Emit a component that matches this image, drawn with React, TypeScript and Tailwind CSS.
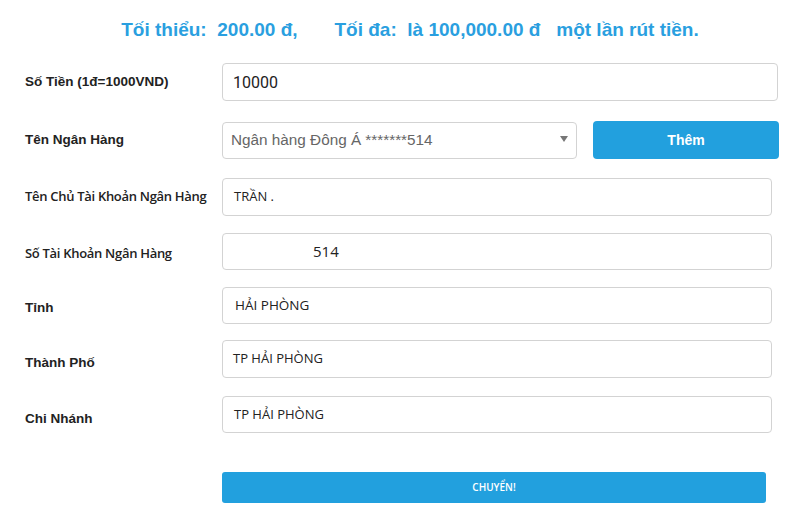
import { useState } from 'react';

const inputBox =
  'h-full w-full rounded-[4px] border border-[#d3d3d3] bg-white outline-none';

function Row({
  label,
  labelClass,
  top,
  height,
  children,
}: {
  label: string;
  labelClass?: string;
  top: string;
  height: string;
  children: React.ReactNode;
}) {
  return (
    <div className={`flex items-center ${top} ${height}`}>
      <div className={`w-[222px] shrink-0 pl-[25px] text-[#222] ${labelClass ?? ''}`}>{label}</div>
      <div className="flex h-full flex-1 items-stretch">{children}</div>
    </div>
  );
}

export default function App() {
  const [amount, setAmount] = useState('10000');

  const arial = "font-['Liberation_Sans',Arial,sans-serif]";
  const open = "font-['Open_Sans','Noto_Sans',sans-serif]";

  return (
    <div className="h-[521px] w-[800px] overflow-hidden bg-white">
      {/* Limits */}
      <div className="flex h-[60px] items-center justify-center pl-[20px]">
        <p className={`whitespace-pre text-[19px] font-bold text-[#2a9fe0] ${arial}`}>
          {'Tối thiểu:  200.00 đ,       Tối đa:  là 100,000.00 đ   một lần rút tiền.'}
        </p>
      </div>

      <Row label="Số Tiền (1đ=1000VND)" labelClass={`${arial} text-[13.5px] font-bold`} top="mt-[3px]" height="h-[38px]">
        <div className="w-[556px]">
          <input
            value={amount}
            onChange={(e) => setAmount(e.target.value)}
            className={`${inputBox} px-[10px] text-[16px] text-[#222] caret-[#222] font-['Roboto',sans-serif]`}
          />
        </div>
      </Row>

      <Row label="Tên Ngân Hàng" labelClass={`${arial} text-[13.5px] font-bold`} top="mt-[20px]" height="h-[38px]">
        <div className="relative w-[355px] py-[0.5px]">
          <div className={`${inputBox} flex items-center px-[8px] text-[15.3px] text-[#666] ${arial}`}>
            Ngân hàng Đông Á *******514
          </div>
          <span className="absolute right-[9px] top-[15px] h-0 w-0 border-x-[4px] border-t-[6px] border-x-transparent border-t-[#777]" />
        </div>
        <button
          className={`ml-[16px] w-[186px] rounded-[4px] bg-[#22a0de] text-[14px] font-bold text-white ${arial}`}
        >
          Thêm
        </button>
      </Row>

      <Row label="Tên Chủ Tài Khoản Ngân Hàng" labelClass={`${open} text-[13px] font-semibold tracking-[-0.3px]`} top="mt-[19px]" height="h-[38px]">
        <div className="w-[550px]">
          <div className={`${inputBox} flex items-center px-[11px] text-[13px] text-[#222] ${open}`}>
            TRẦN .
          </div>
        </div>
      </Row>

      <Row label="Số Tài Khoản Ngân Hàng" labelClass={`${open} text-[13px] font-semibold tracking-[-0.3px] pt-[4px]`} top="mt-[17px]" height="h-[37px]">
        <div className="w-[550px]">
          <div className={`${inputBox} flex items-center pl-[90px] text-[15px] text-[#222] ${open}`}>
            514
          </div>
        </div>
      </Row>

      <Row label="Tỉnh" labelClass={`${arial} text-[13.5px] font-bold pt-[6px]`} top="mt-[17px]" height="h-[37px]">
        <div className="w-[550px]">
          <div className={`${inputBox} flex items-center px-[12px] text-[13.5px] text-[#222] ${open}`}>
            HẢI PHÒNG
          </div>
        </div>
      </Row>

      <Row label="Thành Phố" labelClass={`${arial} text-[13.5px] font-bold pt-[8px]`} top="mt-[16px]" height="h-[38px]">
        <div className="w-[550px]">
          <div className={`${inputBox} flex items-center px-[10px] text-[13px] text-[#222] ${open}`}>
            TP HẢI PHÒNG
          </div>
        </div>
      </Row>

      <Row label="Chi Nhánh" labelClass={`${arial} text-[13.5px] font-bold pt-[9px]`} top="mt-[18px]" height="h-[37px]">
        <div className="w-[550px]">
          <div className={`${inputBox} flex items-center px-[11px] text-[13px] text-[#222] ${open}`}>
            TP HẢI PHÒNG
          </div>
        </div>
      </Row>

      <div className="mt-[39px] flex pl-[222px]">
        <button
          className={`h-[31px] w-[544px] rounded-[3px] bg-[#22a0de] text-[10px] font-semibold text-white ${open}`}
        >
          CHUYỂN!
        </button>
      </div>
    </div>
  );
}
